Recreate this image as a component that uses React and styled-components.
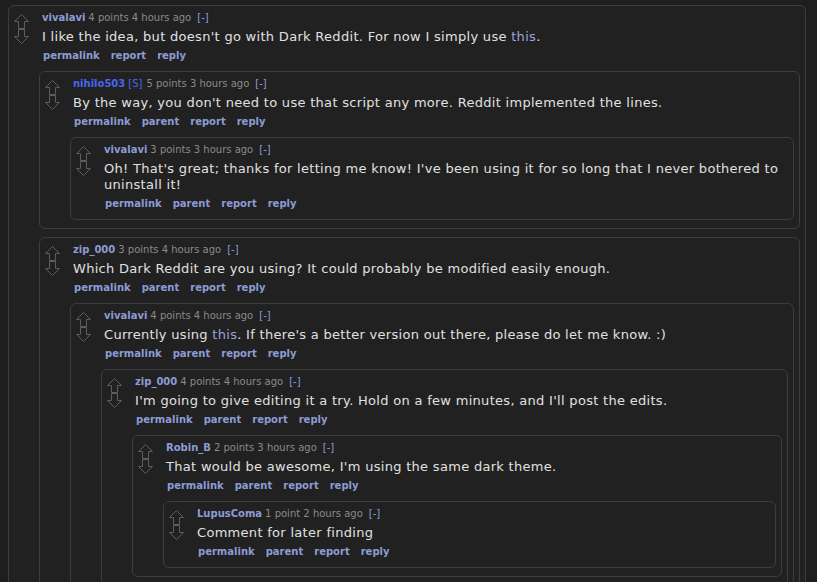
import React from 'react';
import styled, { createGlobalStyle } from 'styled-components';

const GlobalStyle = createGlobalStyle`
    html, body {
        margin: 0;
        padding: 0;
        background: #1e1e1e;
        overflow: hidden;
    }
`;

const Page = styled.div`
    width: 817px;
    height: 582px;
    box-sizing: border-box;
    padding: 5px 11px 0 8px;
    font-family: "DejaVu Sans", Verdana, sans-serif;
    overflow: hidden;
`;

const Box = styled.div`
    display: flex;
    border: 1px solid #3d3d3d;
    border-radius: 6px;
    background: #212121;
    padding: 5px 5px 8px 5px;
`;

const Arrows = styled.div`
    flex: 0 0 15px;
    display: flex;
    flex-direction: column;
    align-items: center;
    padding-top: 3px;
    margin-right: 10px;

    & svg {
        flex: 0 0 auto;
        display: block;
    }
`;

const Main = styled.div`
    flex: 1;
    min-width: 0;
`;

const Tagline = styled.div`
    padding-left: 3px;
    height: 14px;
    line-height: 14px;
    font-size: 10px;
    color: #8a8a8a;
    white-space: nowrap;
`;

const Author = styled.a`
    font-weight: bold;
    color: ${p => (p.$op ? '#4767ee' : '#8c9cd6')};
    margin-right: 3px;
`;

const Tag = styled.span`
    color: #4767ee;
    margin-right: 4px;
`;

const Toggle = styled.span`
    color: #8c9cd6;
    margin-left: 6px;
`;

const Body = styled.p`
    margin: 4px 0 0;
    padding-left: 3px;
    font-size: 13px;
    letter-spacing: 0.3px;
    line-height: 16px;
    color: #e0e0e0;
`;

const InlineLink = styled.a`
    color: #98a4de;
`;

const Buttons = styled.div`
    display: flex;
    gap: 11px;
    margin-top: 4px;
    padding-left: 4px;
    height: 14px;
    line-height: 14px;
    font-size: 10px;
    font-weight: bold;
    color: #8c9cd6;
`;

const Children = styled.div`
    display: flex;
    flex-direction: column;
    gap: 8px;
    margin-top: 8px;
`;

// hollow vote arrows
const UpArrow = () => (
    <svg width="15" height="15" viewBox="0 0 15 15">
        <path d="M7.5 0.5 L14.5 7.5 L10.5 7.5 L10.5 14.5 L4.5 14.5 L4.5 7.5 L0.5 7.5 Z" fill="none" stroke="#5e5e5e" strokeWidth="1" />
    </svg>
);

const DownArrow = () => (
    <svg width="15" height="15" viewBox="0 0 15 15">
        <path d="M7.5 14.5 L14.5 7.5 L10.5 7.5 L10.5 0.5 L4.5 0.5 L4.5 7.5 L0.5 7.5 Z" fill="none" stroke="#5e5e5e" strokeWidth="1" />
    </svg>
);

const thread = {
    author: 'vivalavi', points: '4 points', time: '4 hours ago', top: true,
    body: <>I like the idea, but doesn't go with Dark Reddit. For now I simply use <InlineLink>this</InlineLink>.</>,
    replies: [
        {
            author: 'nihilo503', op: true, points: '5 points', time: '3 hours ago',
            body: "By the way, you don't need to use that script any more. Reddit implemented the lines.",
            replies: [
                {
                    author: 'vivalavi', points: '3 points', time: '3 hours ago',
                    body: "Oh! That's great; thanks for letting me know! I've been using it for so long that I never bothered to uninstall it!",
                    replies: []
                }
            ]
        },
        {
            author: 'zip_000', points: '3 points', time: '4 hours ago',
            body: 'Which Dark Reddit are you using? It could probably be modified easily enough.',
            replies: [
                {
                    author: 'vivalavi', points: '4 points', time: '4 hours ago',
                    body: <>Currently using <InlineLink>this</InlineLink>. If there's a better version out there, please do let me know. :)</>,
                    replies: [
                        {
                            author: 'zip_000', points: '4 points', time: '4 hours ago',
                            body: "I'm going to give editing it a try. Hold on a few minutes, and I'll post the edits.",
                            replies: [
                                {
                                    author: 'Robin_B', points: '2 points', time: '3 hours ago',
                                    body: "That would be awesome, I'm using the same dark theme.",
                                    replies: [
                                        {
                                            author: 'LupusComa', points: '1 point', time: '2 hours ago',
                                            body: 'Comment for later finding',
                                            replies: []
                                        }
                                    ]
                                }
                            ]
                        }
                    ]
                }
            ]
        }
    ]
};

const Comment = ({ c }) => (
    <Box>
        <Arrows>
            <UpArrow />
            <DownArrow />
        </Arrows>
        <Main>
            <Tagline>
                <Author $op={c.op}>{c.author}</Author>
                {c.op && <Tag>[S]</Tag>}
                {c.points} {c.time}
                <Toggle>[-]</Toggle>
            </Tagline>
            <Body>{c.body}</Body>
            <Buttons>
                <span>permalink</span>
                {!c.top && <span>parent</span>}
                <span>report</span>
                <span>reply</span>
            </Buttons>
            {c.replies.length > 0 && (
                <Children>
                    {c.replies.map((r, i) => <Comment key={i} c={r} />)}
                </Children>
            )}
        </Main>
    </Box>
);

export default function App() {
    return (
        <Page>
            <GlobalStyle />
            <Comment c={thread} />
        </Page>
    );
}
